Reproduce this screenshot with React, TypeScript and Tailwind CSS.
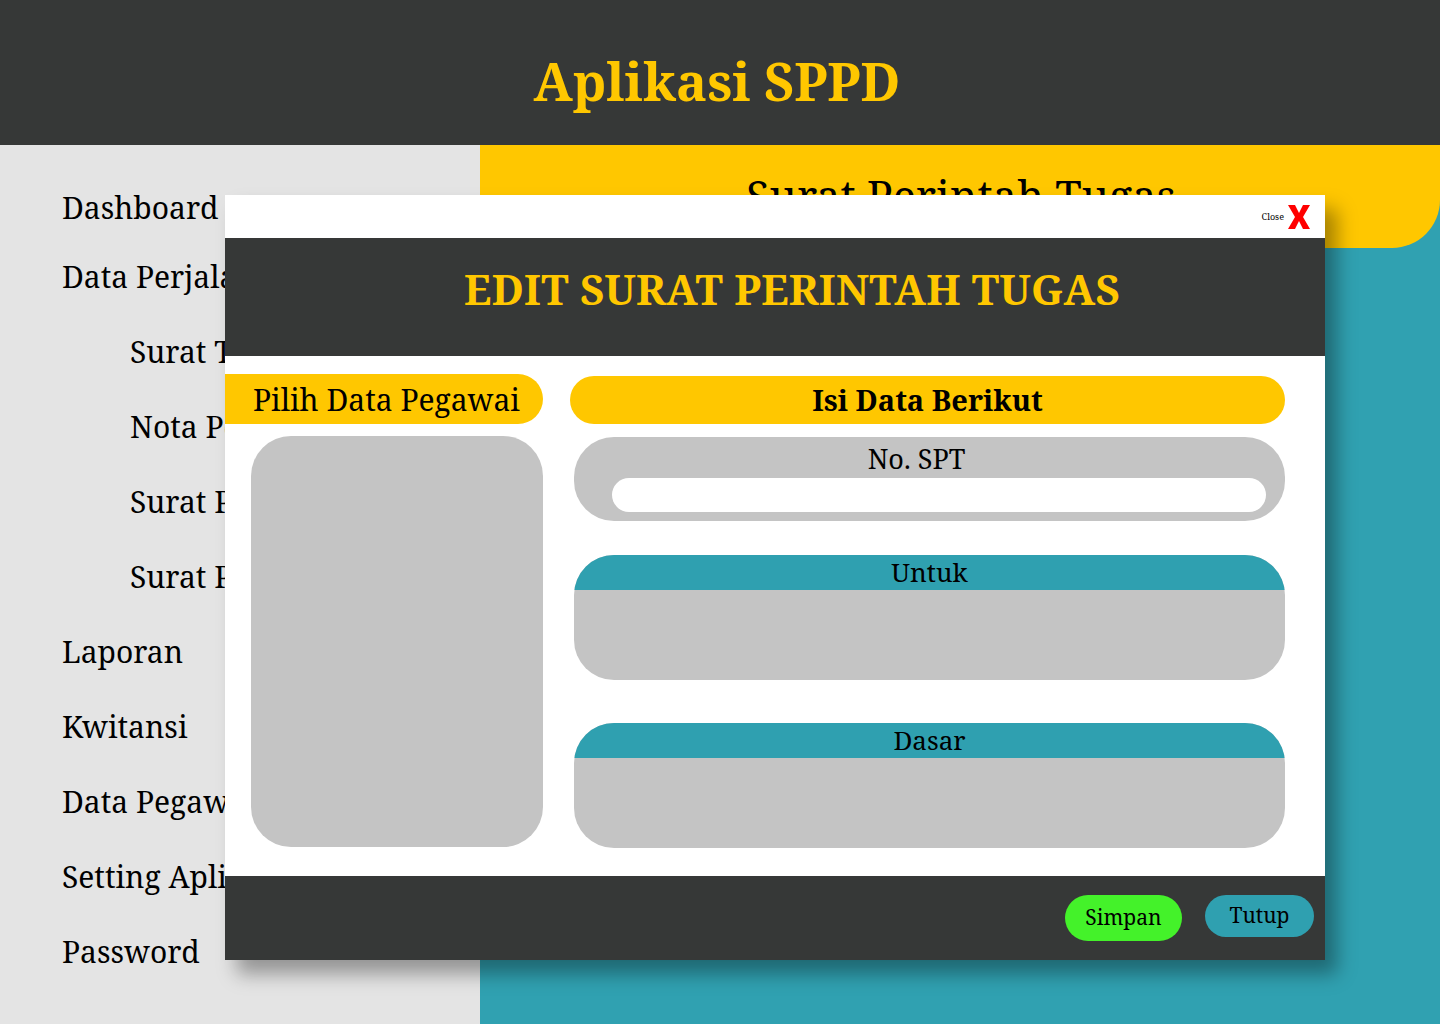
const serif = "font-['Noto_Serif','DejaVu_Serif',serif]"

const menu = [
  { label: 'Data Perjalanan', sub: false },
  { label: 'Surat Tugas', sub: true },
  { label: 'Nota Perjalanan', sub: true },
  { label: 'Surat Perintah', sub: true },
  { label: 'Surat Pernyataan', sub: true },
  { label: 'Laporan', sub: false },
  { label: 'Kwitansi', sub: false },
  { label: 'Data Pegawai', sub: false },
  { label: 'Setting Aplikasi', sub: false },
  { label: 'Password', sub: false },
]

function Sidebar() {
  return (
    <aside className="w-[480px] shrink-0 bg-[#e4e4e4] pt-[24px]">
      <div className="h-[70px] flex items-center pt-[6px] pl-[62px] text-[30px] text-black whitespace-nowrap">
        Dashboard
      </div>
      {menu.map((m) => (
        <div
          key={m.label}
          className={`h-[75px] flex items-center text-[30px] text-black whitespace-nowrap ${
            m.sub ? 'pl-[130px]' : 'pl-[62px]'
          }`}
        >
          {m.label}
        </div>
      ))}
    </aside>
  )
}

function TextArea({ label }: { label: string }) {
  return (
    <div className="h-[125px] rounded-[40px] bg-[#c4c4c4] overflow-hidden flex flex-col">
      <div className="h-[35px] bg-[#2fa0b0] flex items-center justify-center text-[26px] text-black">
        {label}
      </div>
    </div>
  )
}

function EditModal() {
  return (
    <div className="absolute left-[225px] top-[195px] w-[1100px] h-[765px] bg-white flex flex-col shadow-[12px_14px_18px_rgba(0,0,0,0.35)]">
      {/* close strip */}
      <div className="h-[43px] flex items-center justify-end pr-[14px] gap-[3px]">
        <span className="text-[9px] text-black">Close</span>
        <svg width="24" height="26" viewBox="0 0 24 26">
          <path d="M1 1h7l4 8 4-8h7l-7 12 7 12h-7l-4-8-4 8H1l7-12z" fill="#ff0000" />
        </svg>
      </div>

      {/* title */}
      <div className="h-[118px] bg-[#363837] flex items-center justify-center pb-[18px] pl-[34px]">
        <h2 className="text-[42px] font-bold text-[#ffc700] tracking-[0.2px]">
          EDIT SURAT PERINTAH TUGAS
        </h2>
      </div>

      {/* body */}
      <div className="flex-1 flex pt-[18px] pr-[40px]">
        <div className="w-[318px] shrink-0 flex flex-col">
          <div className="h-[50px] bg-[#ffc700] rounded-r-[25px] flex items-center pl-[28px] text-[30px] text-black whitespace-nowrap">
            Pilih Data Pegawai
          </div>
          <div className="ml-[26px] mt-[12px] h-[411px] rounded-[40px] bg-[#c4c4c4]" />
        </div>

        <div className="flex-1 ml-[27px] flex flex-col">
          <div className="mt-[2px] h-[48px] bg-[#ffc700] rounded-full flex items-center justify-center text-[29px] font-bold text-black">
            Isi Data Berikut
          </div>
          <div className="ml-[4px] mt-[13px] flex flex-col gap-[34px]">
            <div className="h-[84px] rounded-[40px] bg-[#c4c4c4] flex flex-col items-center pt-[6px]">
              <div className="text-[27px] text-black leading-[32px] -ml-[26px]">No. SPT</div>
              <div className="mt-[3px] ml-[38px] mr-[19px] self-stretch h-[34px] bg-white rounded-full" />
            </div>
            <TextArea label="Untuk" />
            <div className="mt-[9px]">
              <TextArea label="Dasar" />
            </div>
          </div>
        </div>
      </div>

      {/* footer */}
      <div className="h-[84px] bg-[#363837] flex items-center justify-end pr-[11px] gap-[23px]">
        <button className="w-[117px] h-[46px] rounded-full bg-[#44f22a] text-[21px] text-black">
          Simpan
        </button>
        <button className="w-[109px] h-[42px] -mt-[4px] rounded-full bg-[#2fa0b0] text-[21px] text-black">
          Tutup
        </button>
      </div>
    </div>
  )
}

export default function App() {
  return (
    <div className={`relative w-[1440px] h-[1024px] overflow-hidden ${serif}`}>
      <header className="h-[145px] bg-[#363837] flex items-center justify-center">
        <h1 className="text-[52px] font-bold text-[#ffc700] mt-[16px] -ml-[6px]">Aplikasi SPPD</h1>
      </header>

      <div className="flex h-[879px]">
        <Sidebar />
        <main className="flex-1 bg-[#30a1b1]">
          <div className="h-[103px] bg-[#ffc700] rounded-br-[48px] flex items-center justify-center pl-[2px]">
            <span className="text-[43px] text-black">Surat Perintah Tugas</span>
          </div>
        </main>
      </div>

      <EditModal />
    </div>
  )
}
